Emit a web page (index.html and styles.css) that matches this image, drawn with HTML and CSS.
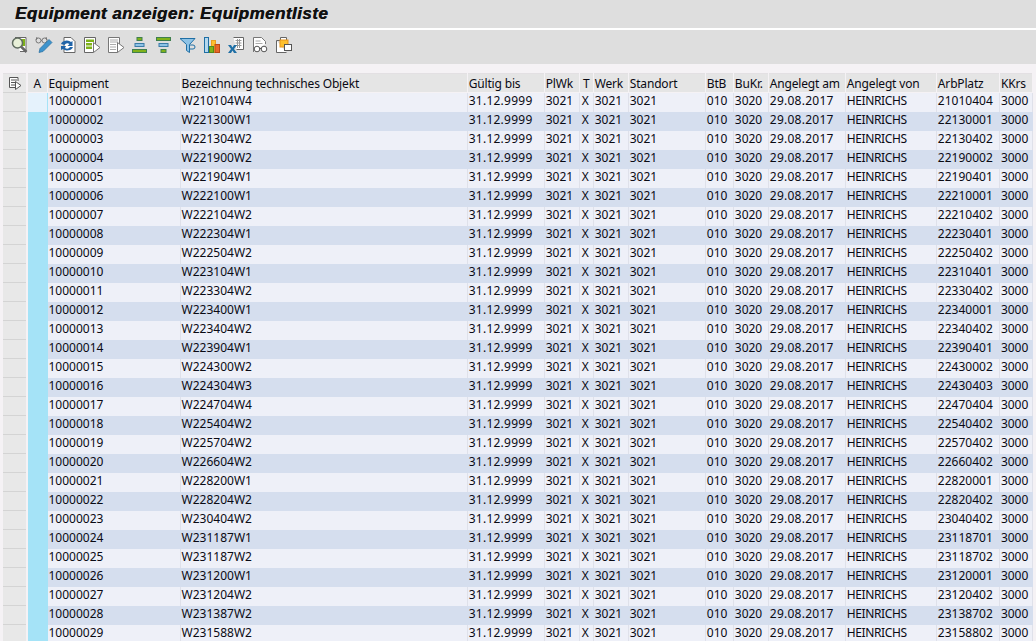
FILE: index.html
```html
<!DOCTYPE html>
<html lang="de">
<head>
    <meta charset="UTF-8" />
    <title>Equipment anzeigen: Equipmentliste</title>
    <link rel="stylesheet" href="styles.css">
</head>
<body>
<div class="title-bar">
    <h1>Equipment anzeigen: Equipmentliste</h1>
</div>

<div class="toolbar">
    <!-- Auswahl anzeigen -->
    <svg class="icon" viewBox="0 0 18 18">
        <path d="M4 1.500h11v14H9" fill="#fff" stroke="#666"/>
        <rect x="7" y="3" width="7" height="7" fill="#7fb21a"/>
        <circle cx="6.500" cy="7" r="5" fill="#e8f0d8" stroke="#5f6b5f" stroke-width="1.500"/>
        <path d="M10 10.500l5.500 5.500" stroke="#666" stroke-width="2.500"/>
    </svg>
    <!-- Anzeigen / Aendern -->
    <svg class="icon" viewBox="0 0 18 18">
        <circle cx="3.500" cy="4.500" r="2.500" fill="none" stroke="#777"/>
        <circle cx="9.500" cy="4.500" r="2.500" fill="none" stroke="#777"/>
        <path d="M6 4.500h1M1 4l1-3M12 4l-1-3" stroke="#777" fill="none"/>
        <path d="M4 16.500l1-4L14 3.500l3 3-9 9z" fill="#3d93cc" stroke="#2a6f9f" stroke-width=".7"/>
    </svg>
    <!-- Aktualisieren -->
    <svg class="icon" viewBox="0 0 18 18">
        <path d="M5 1.500h7l4 4v11H5z" fill="#fff" stroke="#666"/>
        <path d="M2 8a6 5 0 0 1 10-2l1.500-1v5h-5l2-2a3.500 3 0 0 0-5 1z" fill="#1f63a8"/>
        <path d="M14 11a6 5 0 0 1-10 2l-2 1V10h5l-1 2a3.500 3 0 0 0 5-1z" fill="#1f63a8"/>
    </svg>
    <!-- Layout auswaehlen -->
    <svg class="icon" viewBox="0 0 18 18">
        <path d="M12.500 8V1.500h-11v15h9" fill="#fff" stroke="#666"/>
        <path d="M3 3.500h8v2.500H3zM3 7h6v2.500H3zM3 10.500h6V13H3z" fill="#7fb21a"/>
        <path d="M10.500 6.500l6.500 5-6.500 5z" fill="#fff" stroke="#777"/>
    </svg>
    <!-- Layout aendern -->
    <svg class="icon" viewBox="0 0 18 18">
        <path d="M12.500 8V1.500h-11v15h9" fill="#fff" stroke="#777"/>
        <path d="M3 4h8M3 6h8M3 8.500h6M3 11h6M3 13.500h6" stroke="#aaa"/>
        <path d="M10.500 6.500l6.500 5-6.500 5z" fill="#fff" stroke="#777"/>
    </svg>
    <!-- Sortieren aufsteigend -->
    <svg class="icon" viewBox="0 0 18 18">
        <rect x="6" y="1.500" width="5" height="3" fill="#7fb21a" stroke="#3f7f4f"/>
        <rect x="4" y="7.500" width="9" height="3" fill="#8ec3e6" stroke="#3a7ba8"/>
        <rect x="1.500" y="13.500" width="14" height="3" fill="#7fb21a" stroke="#3f7f4f"/>
    </svg>
    <!-- Sortieren absteigend -->
    <svg class="icon" viewBox="0 0 18 18">
        <rect x="1.500" y="1.500" width="14" height="3" fill="#7fb21a" stroke="#3f7f4f"/>
        <rect x="4" y="7.500" width="9" height="3" fill="#8ec3e6" stroke="#3a7ba8"/>
        <rect x="6" y="13.500" width="5" height="3" fill="#7fb21a" stroke="#3f7f4f"/>
    </svg>
    <!-- Filter -->
    <svg class="icon" viewBox="0 0 18 18">
        <path d="M1 2.500h15l-5.500 6v8l-3-2v-6z" fill="#8ec3e6" stroke="#1f6fa5"/>
        <path d="M11 9h3a2 2 0 0 1 0 4h-3" fill="none" stroke="#1f6fa5"/>
    </svg>
    <!-- Grafik -->
    <svg class="icon" viewBox="0 0 18 18">
        <rect x="1.500" y="1.500" width="4" height="15" fill="#b5d8ee" stroke="#1f6fa5"/>
        <rect x="8.500" y="4.500" width="4" height="12" fill="#fdc02f" stroke="#e8a020"/>
        <rect x="6.500" y="10.500" width="4" height="6" fill="#7fb21a" stroke="#4f8a1f"/>
        <rect x="12" y="8.500" width="4.500" height="8" fill="#e8682a" stroke="#b84a18"/>
    </svg>
    <!-- Tabellenkalkulation -->
    <svg class="icon" viewBox="0 0 18 18">
        <path d="M6.500 1.500h10v12h-7" fill="#fff" stroke="#666"/>
        <path d="M8.500 4.500h6M8.500 7h6M8.500 9.500h6M10.500 3v9M12.500 3v9" stroke="#999"/>
        <path d="M1 9h3l1.500 2.500L7 9h3l-3 4 3 4H7l-1.500-2.500L4 17H1l3-4z" fill="#1f6fa5"/>
    </svg>
    <!-- Textverarbeitung -->
    <svg class="icon" viewBox="0 0 18 18">
        <path d="M2.500 16V1.500h8l4 4V8" fill="#fff" stroke="#777"/>
        <path d="M4.500 5h5M4.500 7.500h7" stroke="#aaa"/>
        <circle cx="6" cy="13" r="2.800" fill="#fff" stroke="#555"/>
        <circle cx="13" cy="13" r="2.800" fill="#fff" stroke="#555"/>
        <path d="M8.500 12.500h2" stroke="#555"/>
    </svg>
    <!-- Lokale Datei -->
    <svg class="icon" viewBox="0 0 18 18">
        <path d="M1.500 4.500h4V1.500h6v3M1.500 4.500v12h10" fill="#fff" stroke="#666"/>
        <rect x="5" y="4" width="8" height="7" fill="#fdc02f" stroke="#e8941f"/>
        <rect x="9.500" y="8.500" width="7" height="6" fill="#fff" stroke="#555"/>
    </svg>
</div>

<div class="list-area">
    <table class="alv">
        <colgroup>
            <col class="c-head"><col class="c-key"><col class="c-equi"><col class="c-bez"><col class="c-date">
            <col class="c-plwk"><col class="c-t"><col class="c-plwk"><col class="c-date">
            <col class="c-btb"><col class="c-plwk"><col class="c-date"><col class="c-von"><col class="c-arb"><col class="c-kkrs">
        </colgroup>
        <thead>
            <tr>
                <th class="row-head">
                    <svg class="icon-small" viewBox="0 0 14 14">
                        <path d="M10 5V1.500H1.500v10H7" fill="#fff" stroke="#555"/>
                        <path d="M3 4h6M3 6.500h4M3 9h4" stroke="#555"/>
                        <path d="M7.500 5.500l5.500 4-5.500 4z" fill="#fff" stroke="#555"/>
                    </svg>
                </th>
                <th class="center">A</th><th>Equipment</th><th>Bezeichnung technisches Objekt</th><th>Gültig bis</th>
                <th>PlWk</th><th class="center">T</th><th>Werk</th><th>Standort</th>
                <th>BtB</th><th>BuKr.</th><th>Angelegt am</th><th>Angelegt von</th><th>ArbPlatz</th><th>KKrs</th>
            </tr>
        </thead>
        <tbody>
            <tr><td class="row-head"></td><td class="key first"></td><td>10000001</td><td>W210104W4</td><td class="date">31.12.9999</td><td>3021</td><td class="center">X</td><td>3021</td><td>3021</td><td>010</td><td>3020</td><td class="date">29.08.2017</td><td class="user">HEINRICHS</td><td>21010404</td><td>3000</td></tr>
            <tr><td class="row-head"></td><td class="key"></td><td>10000002</td><td>W221300W1</td><td class="date">31.12.9999</td><td>3021</td><td class="center">X</td><td>3021</td><td>3021</td><td>010</td><td>3020</td><td class="date">29.08.2017</td><td class="user">HEINRICHS</td><td>22130001</td><td>3000</td></tr>
            <tr><td class="row-head"></td><td class="key"></td><td>10000003</td><td>W221304W2</td><td class="date">31.12.9999</td><td>3021</td><td class="center">X</td><td>3021</td><td>3021</td><td>010</td><td>3020</td><td class="date">29.08.2017</td><td class="user">HEINRICHS</td><td>22130402</td><td>3000</td></tr>
            <tr><td class="row-head"></td><td class="key"></td><td>10000004</td><td>W221900W2</td><td class="date">31.12.9999</td><td>3021</td><td class="center">X</td><td>3021</td><td>3021</td><td>010</td><td>3020</td><td class="date">29.08.2017</td><td class="user">HEINRICHS</td><td>22190002</td><td>3000</td></tr>
            <tr><td class="row-head"></td><td class="key"></td><td>10000005</td><td>W221904W1</td><td class="date">31.12.9999</td><td>3021</td><td class="center">X</td><td>3021</td><td>3021</td><td>010</td><td>3020</td><td class="date">29.08.2017</td><td class="user">HEINRICHS</td><td>22190401</td><td>3000</td></tr>
            <tr><td class="row-head"></td><td class="key"></td><td>10000006</td><td>W222100W1</td><td class="date">31.12.9999</td><td>3021</td><td class="center">X</td><td>3021</td><td>3021</td><td>010</td><td>3020</td><td class="date">29.08.2017</td><td class="user">HEINRICHS</td><td>22210001</td><td>3000</td></tr>
            <tr><td class="row-head"></td><td class="key"></td><td>10000007</td><td>W222104W2</td><td class="date">31.12.9999</td><td>3021</td><td class="center">X</td><td>3021</td><td>3021</td><td>010</td><td>3020</td><td class="date">29.08.2017</td><td class="user">HEINRICHS</td><td>22210402</td><td>3000</td></tr>
            <tr><td class="row-head"></td><td class="key"></td><td>10000008</td><td>W222304W1</td><td class="date">31.12.9999</td><td>3021</td><td class="center">X</td><td>3021</td><td>3021</td><td>010</td><td>3020</td><td class="date">29.08.2017</td><td class="user">HEINRICHS</td><td>22230401</td><td>3000</td></tr>
            <tr><td class="row-head"></td><td class="key"></td><td>10000009</td><td>W222504W2</td><td class="date">31.12.9999</td><td>3021</td><td class="center">X</td><td>3021</td><td>3021</td><td>010</td><td>3020</td><td class="date">29.08.2017</td><td class="user">HEINRICHS</td><td>22250402</td><td>3000</td></tr>
            <tr><td class="row-head"></td><td class="key"></td><td>10000010</td><td>W223104W1</td><td class="date">31.12.9999</td><td>3021</td><td class="center">X</td><td>3021</td><td>3021</td><td>010</td><td>3020</td><td class="date">29.08.2017</td><td class="user">HEINRICHS</td><td>22310401</td><td>3000</td></tr>
            <tr><td class="row-head"></td><td class="key"></td><td>10000011</td><td>W223304W2</td><td class="date">31.12.9999</td><td>3021</td><td class="center">X</td><td>3021</td><td>3021</td><td>010</td><td>3020</td><td class="date">29.08.2017</td><td class="user">HEINRICHS</td><td>22330402</td><td>3000</td></tr>
            <tr><td class="row-head"></td><td class="key"></td><td>10000012</td><td>W223400W1</td><td class="date">31.12.9999</td><td>3021</td><td class="center">X</td><td>3021</td><td>3021</td><td>010</td><td>3020</td><td class="date">29.08.2017</td><td class="user">HEINRICHS</td><td>22340001</td><td>3000</td></tr>
            <tr><td class="row-head"></td><td class="key"></td><td>10000013</td><td>W223404W2</td><td class="date">31.12.9999</td><td>3021</td><td class="center">X</td><td>3021</td><td>3021</td><td>010</td><td>3020</td><td class="date">29.08.2017</td><td class="user">HEINRICHS</td><td>22340402</td><td>3000</td></tr>
            <tr><td class="row-head"></td><td class="key"></td><td>10000014</td><td>W223904W1</td><td class="date">31.12.9999</td><td>3021</td><td class="center">X</td><td>3021</td><td>3021</td><td>010</td><td>3020</td><td class="date">29.08.2017</td><td class="user">HEINRICHS</td><td>22390401</td><td>3000</td></tr>
            <tr><td class="row-head"></td><td class="key"></td><td>10000015</td><td>W224300W2</td><td class="date">31.12.9999</td><td>3021</td><td class="center">X</td><td>3021</td><td>3021</td><td>010</td><td>3020</td><td class="date">29.08.2017</td><td class="user">HEINRICHS</td><td>22430002</td><td>3000</td></tr>
            <tr><td class="row-head"></td><td class="key"></td><td>10000016</td><td>W224304W3</td><td class="date">31.12.9999</td><td>3021</td><td class="center">X</td><td>3021</td><td>3021</td><td>010</td><td>3020</td><td class="date">29.08.2017</td><td class="user">HEINRICHS</td><td>22430403</td><td>3000</td></tr>
            <tr><td class="row-head"></td><td class="key"></td><td>10000017</td><td>W224704W4</td><td class="date">31.12.9999</td><td>3021</td><td class="center">X</td><td>3021</td><td>3021</td><td>010</td><td>3020</td><td class="date">29.08.2017</td><td class="user">HEINRICHS</td><td>22470404</td><td>3000</td></tr>
            <tr><td class="row-head"></td><td class="key"></td><td>10000018</td><td>W225404W2</td><td class="date">31.12.9999</td><td>3021</td><td class="center">X</td><td>3021</td><td>3021</td><td>010</td><td>3020</td><td class="date">29.08.2017</td><td class="user">HEINRICHS</td><td>22540402</td><td>3000</td></tr>
            <tr><td class="row-head"></td><td class="key"></td><td>10000019</td><td>W225704W2</td><td class="date">31.12.9999</td><td>3021</td><td class="center">X</td><td>3021</td><td>3021</td><td>010</td><td>3020</td><td class="date">29.08.2017</td><td class="user">HEINRICHS</td><td>22570402</td><td>3000</td></tr>
            <tr><td class="row-head"></td><td class="key"></td><td>10000020</td><td>W226604W2</td><td class="date">31.12.9999</td><td>3021</td><td class="center">X</td><td>3021</td><td>3021</td><td>010</td><td>3020</td><td class="date">29.08.2017</td><td class="user">HEINRICHS</td><td>22660402</td><td>3000</td></tr>
            <tr><td class="row-head"></td><td class="key"></td><td>10000021</td><td>W228200W1</td><td class="date">31.12.9999</td><td>3021</td><td class="center">X</td><td>3021</td><td>3021</td><td>010</td><td>3020</td><td class="date">29.08.2017</td><td class="user">HEINRICHS</td><td>22820001</td><td>3000</td></tr>
            <tr><td class="row-head"></td><td class="key"></td><td>10000022</td><td>W228204W2</td><td class="date">31.12.9999</td><td>3021</td><td class="center">X</td><td>3021</td><td>3021</td><td>010</td><td>3020</td><td class="date">29.08.2017</td><td class="user">HEINRICHS</td><td>22820402</td><td>3000</td></tr>
            <tr><td class="row-head"></td><td class="key"></td><td>10000023</td><td>W230404W2</td><td class="date">31.12.9999</td><td>3021</td><td class="center">X</td><td>3021</td><td>3021</td><td>010</td><td>3020</td><td class="date">29.08.2017</td><td class="user">HEINRICHS</td><td>23040402</td><td>3000</td></tr>
            <tr><td class="row-head"></td><td class="key"></td><td>10000024</td><td>W231187W1</td><td class="date">31.12.9999</td><td>3021</td><td class="center">X</td><td>3021</td><td>3021</td><td>010</td><td>3020</td><td class="date">29.08.2017</td><td class="user">HEINRICHS</td><td>23118701</td><td>3000</td></tr>
            <tr><td class="row-head"></td><td class="key"></td><td>10000025</td><td>W231187W2</td><td class="date">31.12.9999</td><td>3021</td><td class="center">X</td><td>3021</td><td>3021</td><td>010</td><td>3020</td><td class="date">29.08.2017</td><td class="user">HEINRICHS</td><td>23118702</td><td>3000</td></tr>
            <tr><td class="row-head"></td><td class="key"></td><td>10000026</td><td>W231200W1</td><td class="date">31.12.9999</td><td>3021</td><td class="center">X</td><td>3021</td><td>3021</td><td>010</td><td>3020</td><td class="date">29.08.2017</td><td class="user">HEINRICHS</td><td>23120001</td><td>3000</td></tr>
            <tr><td class="row-head"></td><td class="key"></td><td>10000027</td><td>W231204W2</td><td class="date">31.12.9999</td><td>3021</td><td class="center">X</td><td>3021</td><td>3021</td><td>010</td><td>3020</td><td class="date">29.08.2017</td><td class="user">HEINRICHS</td><td>23120402</td><td>3000</td></tr>
            <tr><td class="row-head"></td><td class="key"></td><td>10000028</td><td>W231387W2</td><td class="date">31.12.9999</td><td>3021</td><td class="center">X</td><td>3021</td><td>3021</td><td>010</td><td>3020</td><td class="date">29.08.2017</td><td class="user">HEINRICHS</td><td>23138702</td><td>3000</td></tr>
            <tr><td class="row-head"></td><td class="key"></td><td>10000029</td><td>W231588W2</td><td class="date">31.12.9999</td><td>3021</td><td class="center">X</td><td>3021</td><td>3021</td><td>010</td><td>3020</td><td class="date">29.08.2017</td><td class="user">HEINRICHS</td><td>23158802</td><td>3000</td></tr>
        </tbody>
    </table>
</div>
</body>
</html>
```

FILE: styles.css
```css
html, body {
    height: 100%;
}

body {
    margin: 0;
    overflow: hidden;
    background-color: #f5f2f5;
    color: #0a0a14;
    font-family: "Noto Sans", Arial, sans-serif;
    font-size: 12px;
}

.title-bar {
    height: 28px;
    background-color: #dedede;
    border-bottom: 2px solid #fff;
    padding-left: 15px;
    display: flex;
    align-items: center;
}

h1 {
    margin: 0;
    color: #111;
    font-family: "Liberation Sans", Arial, sans-serif;
    font-size: 17px;
    font-style: italic;
    font-weight: bold;
    letter-spacing: 0.46px;
    text-shadow: 0.4px 0 0 #111;
}

.toolbar {
    height: 30px;
    background-color: #dedede;
    padding: 0 0 4px 11px;
    display: flex;
    align-items: center;
    gap: 6px;
}

.icon {
    width: 18px;
    height: 18px;
    flex: none;
}

.list-area {
    padding: 9px 0 0 3px;
}

.alv {
    table-layout: fixed;
    width: 1030px;
    border-collapse: collapse;
    border-top: 1px solid #e3e0e3;
}

.c-head { width: 24px; }
.c-key { width: 20px; }
.c-equi { width: 133px; }
.c-bez { width: 287px; }
.c-date { width: 77px; }
.c-plwk { width: 35px; }
.c-t { width: 14px; }
.c-btb { width: 28px; }
.c-von { width: 91px; }
.c-arb { width: 63px; }
.c-kkrs { width: 33px; }

th, td {
    height: 19px;
    padding: 0 0 0 1px;
    box-sizing: border-box;
    overflow: hidden;
    white-space: nowrap;
    text-align: left;
    font-weight: normal;
    line-height: 16px;
}

th {
    background-color: #e5e5e5;
    border-right: 1px solid #f5f2f5;
    border-bottom: 1px solid #f5f2f5;
    vertical-align: middle;
    padding-top: 1px;
    letter-spacing: -0.17px;
}

td {
    border-right: 1px solid #dfe1ea;
    padding-bottom: 2px;
}

tbody tr:nth-child(odd) td {
    background-color: #eef0f8;
}

tbody tr:nth-child(even) td {
    background-color: #d5deee;
    border-right-color: #d5deee;
}

th.center,
td.center {
    text-align: center;
    padding-left: 0;
}

td.center {
    padding-right: 2px;
}

.date {
    letter-spacing: 0.25px;
}

.user {
    letter-spacing: -0.4px;
}

th.row-head,
tbody tr td.row-head {
    background-color: #e8e8e8;
    border-right: 2px solid #f5f2f5;
    border-bottom: 1px solid #d4d4d4;
    padding: 0;
    text-align: center;
}

.icon-small {
    display: block;
    width: 14px;
    height: 14px;
    margin: 0 auto;
}

tbody tr td.key {
    background-color: #a5e3f7;
    border-right-color: #a5e3f7;
}

tbody tr td.first {
    background-color: #e5f2fc;
}
```
